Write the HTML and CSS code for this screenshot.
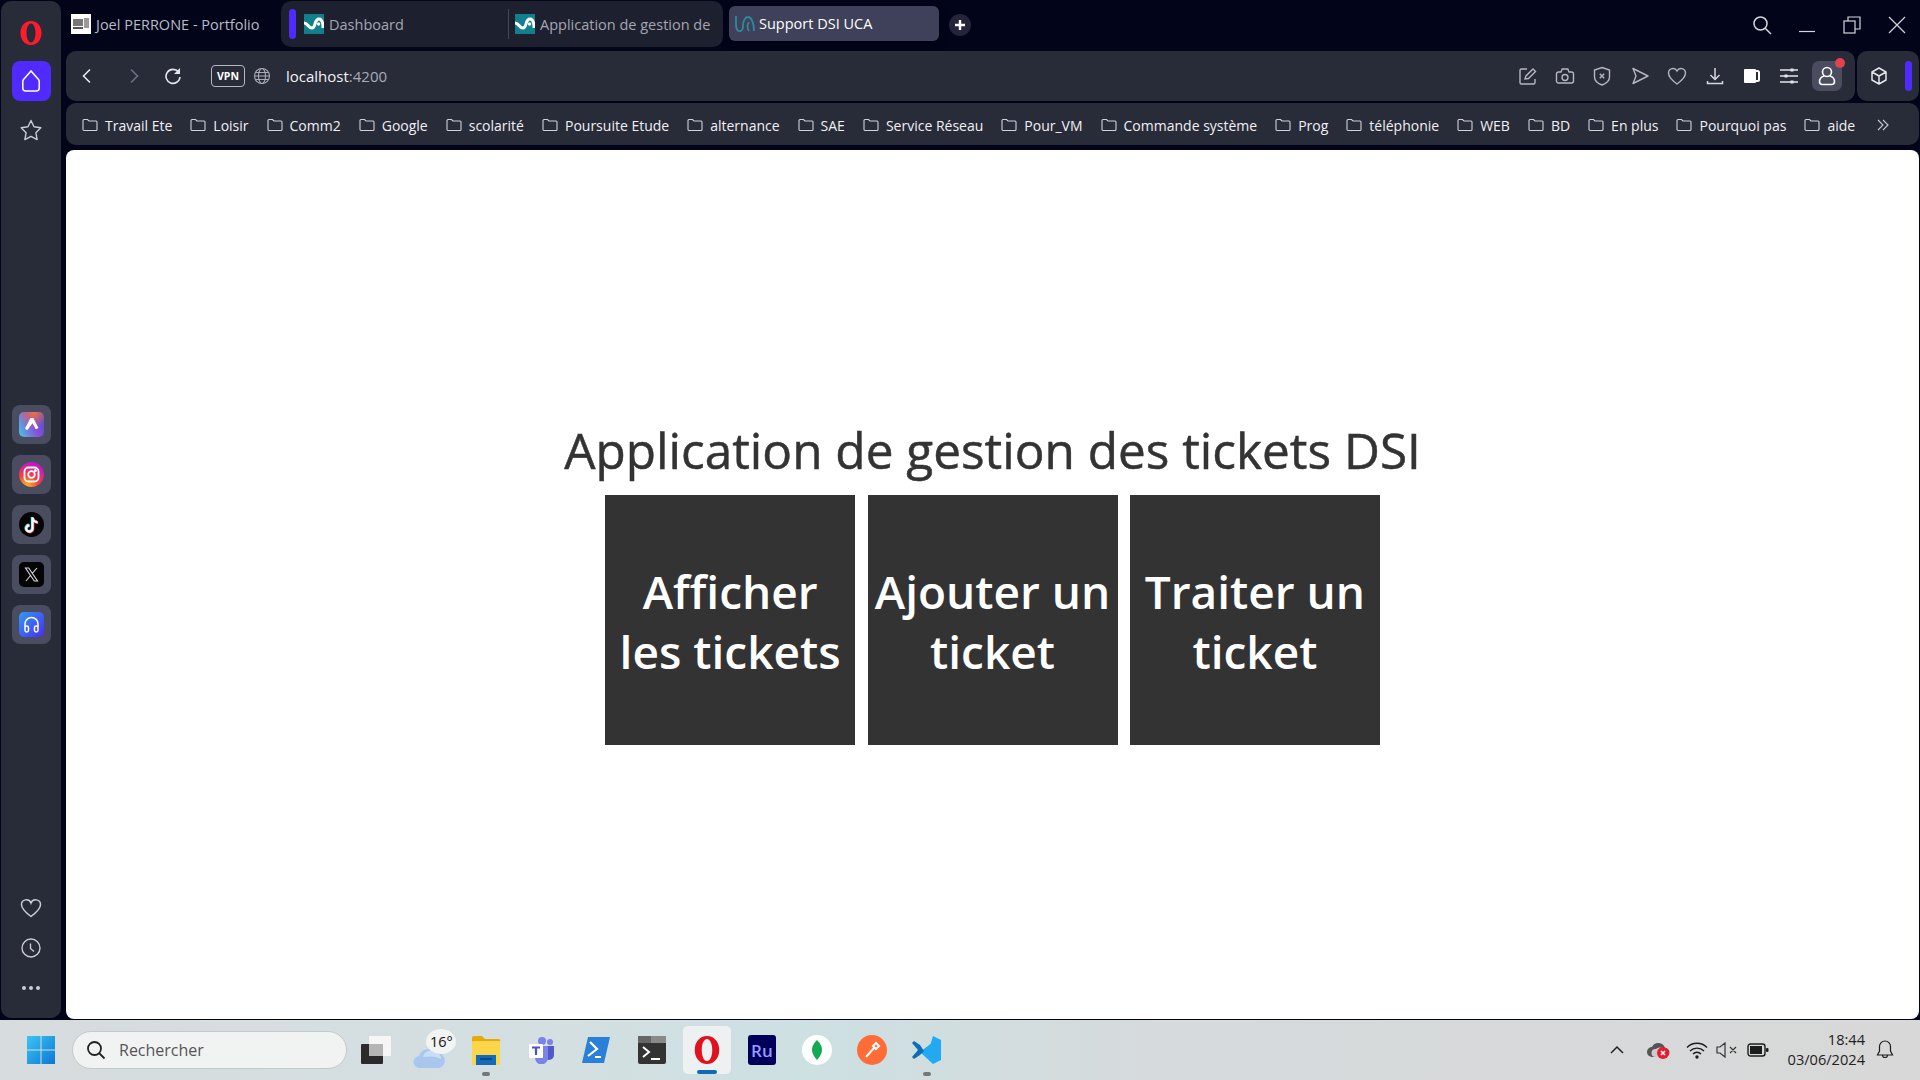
FILE: index.html
```html
<!DOCTYPE html>
<html lang="en">
<head>
    <meta charset="UTF-8">
    <title>Support DSI UCA</title>
    <link rel="stylesheet" href="styles.css">
</head>
<body>
    <div class="window">
        <!-- left sidebar -->
        <aside class="sidebar">
            <div class="side-logo">
                <svg width="24" height="26" viewBox="0 0 24 26"><path fill="#ff1b2d" fill-rule="evenodd" d="M12 1C5.500 1 1.500 6.500 1.500 13S5.500 25 12 25s10.500-5.500 10.500-12S18.500 1 12 1zm0 2.500c2.700 0 4.500 4.300 4.500 9.500s-1.800 9.500-4.500 9.500S7.500 18.200 7.500 13 9.300 3.500 12 3.500z"/></svg>
            </div>
            <div class="side-home">
                <svg width="22" height="24" viewBox="0 0 22 24" fill="none" stroke="#fff" stroke-width="1.500"><path d="M11 2 3.500 10.500a3 3 0 0 0-.7 1.900V19a3 3 0 0 0 3 3h10.400a3 3 0 0 0 3-3v-6.600a3 3 0 0 0-.7-1.900z"/></svg>
            </div>
            <div class="side-star">
                <svg width="24" height="24" viewBox="0 0 24 24" fill="none" stroke="#c9ccd6" stroke-width="1.400" stroke-linejoin="round"><path d="m12 2.500 3 6.300 6.800 1-4.900 4.900 1.200 6.900-6.100-3.300-6.100 3.300 1.200-6.900L2.200 9.800l6.800-1z"/></svg>
            </div>
            <div class="side-apps">
                <div class="app-btn"><span class="app-icon app-aria"><svg width="25" height="25" viewBox="0 0 25 25"><path fill="#fff" d="M11.500 6h2.800l5.200 10-2.700 1.300-3.300-6-5.300 7L6 16.500z"/></svg></span></div>
                <div class="app-btn"><span class="app-icon app-insta"><svg width="25" height="25" viewBox="0 0 25 25" fill="none" stroke="#fff" stroke-width="1.800"><rect x="5.500" y="5.500" width="14" height="14" rx="4"/><circle cx="12.500" cy="12.500" r="3.300"/><circle cx="16.400" cy="8.600" r=".6" fill="#fff"/></svg></span></div>
                <div class="app-btn"><span class="app-icon app-tiktok"><svg width="25" height="25" viewBox="0 0 25 25"><path fill="none" stroke="#25f4ee" stroke-width="2.400" d="M13 5v11a3.200 3.200 0 1 1-3.200-3.200M13 5c.3 2.800 2 4.500 5 4.800"/><path fill="none" stroke="#fe2c55" stroke-width="2.400" d="M14.200 6v11a3.200 3.200 0 1 1-3.200-3.200M14.200 6c.3 2.800 2 4.500 5 4.800"/><path fill="none" stroke="#fff" stroke-width="2.200" d="M13.600 5.500v11a3.200 3.200 0 1 1-3.200-3.200M13.600 5.500c.3 2.800 2 4.500 5 4.800"/></svg></span></div>
                <div class="app-btn"><span class="app-icon app-x"><svg width="25" height="25" viewBox="0 0 25 25" fill="none" stroke="#d8d8d8" stroke-width="1.100"><path d="M6.500 6h3.200l8.800 13h-3.200zM18 6l-5 5.600M11.500 13.500 7 19"/></svg></span></div>
                <div class="app-btn"><span class="app-icon app-music"><svg width="25" height="25" viewBox="0 0 25 25" fill="none" stroke="#fff" stroke-width="1.500"><path d="M6 15v-3a6.500 6.500 0 0 1 13 0v3"/><rect x="6" y="14" width="3.500" height="6" rx="1.700"/><rect x="15.500" y="14" width="3.500" height="6" rx="1.700"/></svg></span></div>
            </div>
            <div class="side-bottom">
                <svg width="22" height="20" viewBox="0 0 22 20" fill="none" stroke="#c9ccd6" stroke-width="1.500"><path d="M11 18.500C5 14 1.500 10.800 1.500 6.800A4.900 4.900 0 0 1 11 5a4.900 4.900 0 0 1 9.500 1.800c0 4-3.500 7.200-9.500 11.700z"/></svg>
                <svg width="20" height="20" viewBox="0 0 20 20" fill="none" stroke="#c9ccd6" stroke-width="1.400"><circle cx="10" cy="10" r="9"/><path d="M9.500 5.500v5l3.500 3"/></svg>
                <svg class="side-dots" width="20" height="6" viewBox="0 0 20 6" fill="#c9ccd6"><circle cx="3" cy="3" r="2"/><circle cx="10" cy="3" r="2"/><circle cx="17" cy="3" r="2"/></svg>
            </div>
        </aside>

        <div class="browser">
            <!-- tabs -->
            <div class="tabstrip">
                <div class="tab tab-plain">
                    <svg class="favicon" width="20" height="20" viewBox="0 0 20 20"><rect width="20" height="20" fill="#fff"/><rect x="2" y="5" width="10" height="7" fill="#777"/><rect x="13" y="4" width="5" height="10" fill="#999"/><rect x="2" y="13" width="10" height="2" fill="#555"/></svg>
                    <span>Joel PERRONE - Portfolio</span>
                </div>
                <div class="tab-group">
                    <span class="group-mark"></span>
                    <div class="tab tab-dash">
                        <svg class="favicon" width="20" height="20" viewBox="0 0 20 20"><rect width="20" height="20" fill="#12808c"/><path fill="none" stroke="#fff" stroke-width="3" d="M0 9c4 0 4 5 8 5s2-9 7-9c3 0 4 4 4 9"/><circle cx="14.500" cy="10" r="1.700" fill="#fff"/></svg>
                        <span>Dashboard</span>
                    </div>
                    <div class="tab tab-app">
                        <svg class="favicon" width="20" height="20" viewBox="0 0 20 20"><rect width="20" height="20" fill="#12808c"/><path fill="none" stroke="#fff" stroke-width="3" d="M0 9c4 0 4 5 8 5s2-9 7-9c3 0 4 4 4 9"/><circle cx="14.500" cy="10" r="1.700" fill="#fff"/></svg>
                        <span>Application de gestion de</span>
                    </div>
                </div>
                <div class="tab tab-active">
                    <svg class="favicon" width="22" height="20" viewBox="0 0 22 20" fill="none" stroke="#2f8a9e" stroke-width="1.800"><path d="M2 2v9c0 8 7 8 7 1 0-5 2-9 5-9s6 5 6 14"/><path d="M15 8c-2 3-2 6 0 9"/></svg>
                    <span>Support DSI UCA</span>
                </div>
                <div class="tab-new">
                    <svg width="12" height="12" viewBox="0 0 12 12" stroke="#fff" stroke-width="2.400"><path d="M6 1v10M1 6h10"/></svg>
                </div>
                <div class="win-controls">
                    <svg class="win-search" width="22" height="22" viewBox="0 0 22 22" fill="none" stroke="#d4d6dc" stroke-width="1.500"><circle cx="9.500" cy="9.500" r="6.500"/><path d="m14 14 6 6"/></svg>
                    <svg width="18" height="18" viewBox="0 0 18 18" stroke="#d4d6dc" stroke-width="1.200"><path d="M1 15.500h16"/></svg>
                    <svg width="18" height="18" viewBox="0 0 18 18" fill="none" stroke="#d4d6dc" stroke-width="1.200"><rect x="1" y="5" width="11" height="12"/><path d="M5 5V1h12v12h-5"/></svg>
                    <svg width="18" height="18" viewBox="0 0 18 18" stroke="#d4d6dc" stroke-width="1.200"><path d="m1 1 16 16M17 1 1 17"/></svg>
                </div>
            </div>

            <!-- address bar -->
            <div class="toolbar">
                <div class="addressbar">
                    <svg class="nav-icon" width="12" height="16" viewBox="0 0 12 16" fill="none" stroke="#e4e6ec" stroke-width="1.600"><path d="M9 1.500 2.500 8 9 14.500"/></svg>
                    <svg class="nav-icon nav-fwd" width="12" height="16" viewBox="0 0 12 16" fill="none" stroke="#6d7080" stroke-width="1.600"><path d="M3 1.500 9.500 8 3 14.500"/></svg>
                    <svg class="nav-icon nav-reload" width="18" height="18" viewBox="0 0 18 18" fill="none" stroke="#e4e6ec" stroke-width="1.600"><path d="M14.500 5A7 7 0 1 0 16 10"/><path fill="#e4e6ec" stroke="none" d="M16 1v6h-6z"/></svg>
                    <span class="vpn">VPN</span>
                    <svg class="globe" width="18" height="18" viewBox="0 0 18 18" fill="none" stroke="#a9acb8" stroke-width="1.100"><circle cx="9" cy="9" r="7.500"/><ellipse cx="9" cy="9" rx="3.500" ry="7.500"/><path d="M1.500 9h15M2.500 5.500h13M2.500 12.500h13"/></svg>
                    <span class="url">localhost<span class="url-port">:4200</span></span>
                    <div class="addr-actions">
                        <span class="act"><svg width="20" height="20" viewBox="0 0 20 20" fill="none" stroke="#b5b7c2" stroke-width="1.400"><path d="M9 3H3.500A1.500 1.500 0 0 0 2 4.500v12A1.500 1.500 0 0 0 3.500 18h12a1.500 1.500 0 0 0 1.500-1.500V13"/><path d="m7 13 1-3 7-7 2.500 2.500-7 7z"/></svg></span>
                        <span class="act"><svg width="20" height="20" viewBox="0 0 20 20" fill="none" stroke="#b5b7c2" stroke-width="1.400"><path d="M3.500 6H6l1.200-3h5.600L14 6h2.500A2 2 0 0 1 18.500 8v7a2 2 0 0 1-2 2h-13a2 2 0 0 1-2-2V8a2 2 0 0 1 2-2z"/><circle cx="10" cy="11.500" r="3"/></svg></span>
                        <span class="act"><svg width="20" height="20" viewBox="0 0 20 20" fill="none" stroke="#b5b7c2" stroke-width="1.400"><path d="M10 1.500 17.500 4v7c0 4-3.500 6.500-7.500 8-4-1.500-7.500-4-7.500-8V4z"/><path d="m7.800 7.800 4.400 4.400m0-4.400-4.400 4.400"/></svg></span>
                        <span class="act"><svg width="20" height="20" viewBox="0 0 20 20" fill="none" stroke="#b5b7c2" stroke-width="1.400" stroke-linejoin="round"><path d="m3 2.500 15 7.500-15 7.500L6 10z"/></svg></span>
                        <span class="act"><svg width="20" height="20" viewBox="0 0 20 20" fill="none" stroke="#b5b7c2" stroke-width="1.400"><path d="M10 18C4.500 14 1.500 11 1.500 7A4.500 4.500 0 0 1 10 5a4.500 4.500 0 0 1 8.500 2c0 4-3 7-8.500 11z"/></svg></span>
                        <span class="act"><svg width="20" height="20" viewBox="0 0 20 20" fill="none" stroke="#d6d8df" stroke-width="1.500"><path d="M10 2v11M5.500 9l4.500 4.500L14.500 9M2.500 15v2.500h15V15"/></svg></span>
                        <span class="act"><svg width="20" height="20" viewBox="0 0 20 20"><path fill="#fff" d="M3 3h10a1 1 0 0 1 1 1v12a1 1 0 0 1-1 1H3a1 1 0 0 1-1-1V4a1 1 0 0 1 1-1z"/><path fill="#fff" d="M14 4h1.500a2.500 2.500 0 0 1 2.500 2.500v7a2.500 2.500 0 0 1-2.500 2.500H14v-2h1.500a.5.500 0 0 0 .5-.5v-7a.5.500 0 0 0-.5-.5H14z"/></svg></span>
                        <span class="act"><svg width="20" height="20" viewBox="0 0 20 20" stroke="#e4e6ec" stroke-width="1.500"><path d="M1 4h18M1 10h18M1 16h18"/><path stroke-width="3" d="M13 2.500v3M7 8.500v3M13 14.500v3"/></svg></span>
                    </div>
                    <div class="profile">
                        <svg width="18" height="20" viewBox="0 0 18 20" fill="none" stroke="#fff" stroke-width="1.600"><circle cx="9" cy="6" r="4.500"/><path d="M6 10c-3 1-4.500 3-4.500 5.500 0 2 1.500 3 3 3h9c1.500 0 3-1 3-3C16.500 13 15 11 12 10"/></svg>
                        <span class="profile-dot"></span>
                    </div>
                </div>
                <div class="extensions">
                    <svg width="18" height="18" viewBox="0 0 18 18" fill="none" stroke="#e4e6ec" stroke-width="1.500" stroke-linejoin="round"><path d="m9 1 7 4v8l-7 4-7-4V5zM2 5l7 4 7-4M9 9v8"/></svg>
                    <span class="ext-bar"></span>
                </div>
            </div>

            <!-- bookmarks -->
            <nav class="bookmarks" id="bookmarks"></nav>

            <!-- the actual page -->
            <main class="viewport">
                <h1 class="page-title">Application de gestion des tickets DSI</h1>
                <div class="actions">
                    <button class="big-btn">Afficher les tickets</button>
                    <button class="big-btn">Ajouter un ticket</button>
                    <button class="big-btn">Traiter un ticket</button>
                </div>
            </main>
        </div>
    </div>

    <!-- windows taskbar -->
    <footer class="taskbar">
        <svg class="win-logo" width="30" height="30" viewBox="0 0 30 30"><defs><linearGradient id="winblue" x1="0" y1="0" x2="1" y2="1"><stop offset="0" stop-color="#3cc4f4"/><stop offset="1" stop-color="#0a78d4"/></linearGradient></defs><path fill="url(#winblue)" d="M1 1h13.500v13.500H1zM15.500 1H29v13.500H15.500zM1 15.500h13.500V29H1zM15.500 15.500H29V29H15.500z"/></svg>
        <div class="task-search">
            <svg width="20" height="20" viewBox="0 0 20 20" fill="none" stroke="#222" stroke-width="1.800"><circle cx="8.500" cy="8.500" r="6.500"/><path d="m13 13 5.500 5.500"/></svg>
            <span>Rechercher</span>
        </div>
        <div class="task-icons">
            <span class="task-slot"><svg width="32" height="30" viewBox="0 0 32 30"><rect x="1" y="9" width="22" height="20" rx="1" fill="#2b2b2b"/><rect x="9" y="1" width="22" height="20" rx="1" fill="#f6f6f6"/><rect x="9" y="9" width="14" height="12" fill="#b5b5b5"/></svg></span>
            <span class="task-slot task-weather">
                <svg width="32" height="22" viewBox="0 0 32 22"><rect x="22" y="0" width="6" height="8" fill="#f08a24"/><path fill="#a9c7ee" d="M7 22a6 6 0 0 1-1-12 9 9 0 0 1 16-3 7 7 0 0 1 4 15z"/><path fill="#c9def6" d="M10 11a7 7 0 0 1 12-4c4 0 6 2 6 6-5-3-12-3-18-2z"/></svg>
                <span class="temp">16°</span>
            </span>
            <span class="task-slot task-dot"><svg width="30" height="30" viewBox="0 0 30 30"><path fill="#e8a90c" d="M1 3a2 2 0 0 1 2-2h8l3 3h14a1 1 0 0 1 1 1v4H1z"/><rect x="1" y="6" width="28" height="24" rx="1" fill="#fbd54a"/><rect x="5" y="20" width="20" height="10" fill="#0f6cbd"/><rect x="9" y="23" width="12" height="2" fill="#07457e"/></svg></span>
            <span class="task-slot"><svg width="28" height="28" viewBox="0 0 28 28"><circle cx="23" cy="6" r="3" fill="#7b83eb"/><circle cx="15" cy="5" r="4" fill="#7b83eb"/><path fill="#5059c9" d="M17 10h10v9a5 5 0 0 1-10 0z"/><path fill="#7b83eb" d="M8 10h13v12a6 6 0 0 1-13 0z"/><rect x="2" y="8" width="14" height="14" rx="1" fill="#fff"/><path stroke="#4b53bc" stroke-width="2.200" d="M5 11.500h8M9 11.500V19"/></svg></span>
            <span class="task-slot"><svg width="30" height="28" viewBox="0 0 30 28"><path fill="#2a7fd9" d="M7 1h22l-6 26H1z"/><path fill="none" stroke="#fff" stroke-width="2.200" d="m9 6 7 7-9 7M14 21h6"/></svg></span>
            <span class="task-slot"><svg width="30" height="30" viewBox="0 0 30 30"><rect x="1" y="1" width="28" height="28" rx="2" fill="#333"/><rect x="1" y="1" width="13" height="7" fill="#666"/><rect x="14" y="1" width="15" height="7" fill="#8a8a8a"/><path fill="none" stroke="#fff" stroke-width="2" d="m6 12 6 5-6 5"/><path stroke="#fff" stroke-width="2" d="M14 24h9"/></svg></span>
            <span class="task-slot task-current"><svg width="28" height="32" viewBox="0 0 24 26"><path fill="#e0121f" fill-rule="evenodd" d="M12 1C5.500 1 1.500 6.500 1.500 13S5.500 25 12 25s10.500-5.500 10.500-12S18.500 1 12 1zm0 2.500c2.700 0 4.500 4.300 4.500 9.500s-1.800 9.500-4.500 9.500S7.500 18.200 7.500 13 9.300 3.500 12 3.500z"/></svg></span>
            <span class="task-slot"><span class="ru-icon">Ru</span></span>
            <span class="task-slot"><svg width="30" height="30" viewBox="0 0 30 30"><circle cx="15" cy="15" r="15" fill="#fff"/><path fill="#13aa52" d="M15 5c4 4 5 7 5 10s-2 7-5 10c-3-3-5-7-5-10s1-6 5-10z"/></svg></span>
            <span class="task-slot"><svg width="30" height="30" viewBox="0 0 30 30"><circle cx="15" cy="15" r="15" fill="#ff6c37"/><path fill="none" stroke="#fff" stroke-width="2" d="m9 22 8-9m2-5 3 3-3 3-3-3z"/></svg></span>
            <span class="task-slot task-dot"><svg width="30" height="30" viewBox="0 0 30 30"><path fill="#23a9f2" d="M21 1 29 5v20l-8 4-13-12 13-10v14l-5-4z"/><path fill="#0a6fb8" d="m8 10-6-4-2 2 6 7-6 7 2 2 6-4 4-4z"/></svg></span>
        </div>
        <div class="tray">
            <svg class="tray-chevron" width="16" height="10" viewBox="0 0 16 10" fill="none" stroke="#222" stroke-width="1.500"><path d="m2 8 6-6 6 6"/></svg>
            <span class="tray-cloud">
                <svg width="24" height="20" viewBox="0 0 24 20"><path fill="#555" d="M6 17a5 5 0 0 1 0-10 7 7 0 0 1 13 1 4.500 4.500 0 0 1 0 9z"/><path fill="#ccc" d="M9 17a4 4 0 0 1 1-8 5 5 0 0 1 8 1l2 7z"/><circle cx="17" cy="13" r="6" fill="#e81c2e"/><path stroke="#fff" stroke-width="1.500" d="m15 11 4 4m0-4-4 4"/></svg>
            </span>
            <svg class="tray-wifi" width="22" height="18" viewBox="0 0 22 18" fill="none" stroke="#1c1c1c" stroke-width="1.400"><path d="M1 6.500a14 14 0 0 1 20 0M4 10a10 10 0 0 1 14 0M7 13a5.500 5.500 0 0 1 8 0"/><circle cx="11" cy="16" r="1" fill="#1c1c1c"/></svg>
            <svg class="tray-sound" width="22" height="16" viewBox="0 0 22 16" fill="none" stroke="#333" stroke-width="1.200"><path d="M1 5v6h3l5 4V1L4 5zM14 5l6 6m0-6-6 6"/></svg>
            <svg class="tray-battery" width="22" height="14" viewBox="0 0 22 14"><rect x="1" y="1" width="17" height="12" rx="2.500" fill="none" stroke="#1c1c1c" stroke-width="1.400"/><rect x="3" y="3" width="12" height="8" fill="#1c1c1c"/><rect x="19" y="5" width="2.500" height="4" rx="1" fill="#1c1c1c"/></svg>
            <div class="clock"><span>18:44</span><span>03/06/2024</span></div>
            <svg class="tray-bell" width="18" height="20" viewBox="0 0 18 20" fill="none" stroke="#1c1c1c" stroke-width="1.200"><path d="M9 1a5.500 5.500 0 0 0-5.500 5.500V11L1.500 15h15l-2-4V6.500A5.500 5.500 0 0 0 9 1zM6.500 15a2.500 2.500 0 0 0 5 0"/></svg>
        </div>
    </footer>

    <script>
        const bookmarkNames = ['Travail Ete', 'Loisir', 'Comm2', 'Google', 'scolarité', 'Poursuite Etude', 'alternance', 'SAE', 'Service Réseau', 'Pour_VM', 'Commande système', 'Prog', 'téléphonie', 'WEB', 'BD', 'En plus', 'Pourquoi pas', 'aide'];
        const folderIcon = '<svg width="16" height="14" viewBox="0 0 16 14" fill="none" stroke="#d0d2da" stroke-width="1.100"><path d="M1 2.500A1 1 0 0 1 2 1.500h3.500L7 3h7a1 1 0 0 1 1 1v7.500a1 1 0 0 1-1 1H2a1 1 0 0 1-1-1z"/></svg>';
        const bar = document.getElementById('bookmarks');
        bookmarkNames.forEach(function(name) {
            const item = document.createElement('a');
            item.className = 'bookmark';
            item.innerHTML = folderIcon + '<span>' + name + '</span>';
            bar.appendChild(item);
        });
        const more = document.createElement('span');
        more.className = 'bookmark-more';
        more.innerHTML = '<svg width="14" height="12" viewBox="0 0 14 12" fill="none" stroke="#c9ccd6" stroke-width="1.100"><path d="m2 1 5 5-5 5M7 1l5 5-5 5"/></svg>';
        bar.appendChild(more);
    </script>
</body>
</html>
```

FILE: styles.css
```css
* { box-sizing: border-box; }
body { margin: 0; width: 1920px; height: 1080px; overflow: hidden; background-color: #02051a; font-family: "Open Sans", "Liberation Sans", sans-serif; color: #fff; }

.window { display: flex; height: 1020px; padding: 1px 1px 1px 1px; gap: 5px; }

.sidebar { width: 60px; flex: none; background-color: #282b38; border-radius: 10px; display: flex; flex-direction: column; align-items: center; height: 1017px; }
.side-logo { height: 60px; display: flex; align-items: center; justify-content: center; padding-top: 4px; }
.side-home { width: 39px; height: 40px; background-color: #4f2bff; border-radius: 8px; display: flex; align-items: center; justify-content: center; }
.side-star { margin-top: 17px; height: 24px; }
.side-apps { margin-top: 263px; display: flex; flex-direction: column; gap: 11px; }
.app-btn { width: 39px; height: 39px; border-radius: 8px; background-color: #4a4c60; display: flex; align-items: center; justify-content: center; }
.app-icon { width: 25px; height: 25px; display: block; }
.app-icon svg { display: block; }
.app-aria { border-radius: 5px; background: radial-gradient(circle at 60% 0%, #f5703c 0%, rgba(245,112,60,0) 55%), linear-gradient(65deg, #48c8e0 0%, #8a4fd8 55%, #3f4fd8 100%); }
.app-insta { border-radius: 50%; background: radial-gradient(circle at 30% 100%, #fdc21f 0%, #f5423c 40%, #c316c9 80%); }
.app-tiktok { border-radius: 50%; background-color: #050505; }
.app-x { border-radius: 5px; background-color: #050505; }
.app-music { border-radius: 5px; background: linear-gradient(135deg, #2f9af5 0%, #4a2cf5 100%); }
.side-bottom { margin-top: auto; padding-bottom: 27px; display: flex; flex-direction: column; align-items: center; gap: 20px; }
.side-dots { margin-top: 7px; }

.browser { flex: 1; min-width: 0; display: flex; flex-direction: column; }

.tabstrip { height: 50px; display: flex; align-items: flex-start; font-size: 14.500px; }
.tab { display: flex; align-items: center; gap: 5px; white-space: nowrap; }
.favicon { flex: none; }
.tab-plain { width: 215px; height: 46px; padding-left: 5px; color: #b9bbc6; }
.tab-group { width: 442px; height: 46px; background-color: #1d202e; border-radius: 10px; display: flex; align-items: center; padding-left: 8px; }
.group-mark { width: 7px; height: 30px; background-color: #4f2bff; border-radius: 4px; margin-right: 8px; }
.tab-dash { width: 204px; color: #a5a7b3; }
.tab-app { width: 205px; overflow: hidden; padding-left: 6px; border-left: 1px solid #44475a; color: #a5a7b3; height: 30px; }
.tab-active { width: 210px; height: 35px; margin: 5px 0 0 6px; padding-left: 5px; gap: 3px; background-color: #3e4159; border-radius: 6px; box-shadow: 0 3px 8px rgba(0,0,0,0.3); color: #fff; }
.tab-new { width: 22px; height: 22px; margin: 13px 0 0 10px; border-radius: 50%; background-color: #23263a; display: flex; align-items: center; justify-content: center; }
.win-controls { margin-left: auto; display: flex; align-items: center; gap: 27px; height: 36px; margin-top: 6px; padding-right: 13px; }
.win-search { margin-right: -2px; }

.toolbar { height: 50px; display: flex; gap: 2px; }
.addressbar { flex: 1; background-color: #282b38; border-radius: 10px; display: flex; align-items: center; padding-left: 15px; font-size: 15px; }
.nav-fwd { margin-left: 35px; }
.nav-reload { margin-left: 24px; }
.vpn { margin-left: 29px; width: 34px; height: 22px; border: 1px solid #b5b7c2; border-radius: 4px; font-size: 10.500px; font-weight: 700; display: flex; align-items: center; justify-content: center; }
.globe { margin-left: 8px; }
.url { margin-left: 15px; color: #f2f3f6; }
.url-port { color: #a9acb8; }
.addr-actions { margin-left: auto; display: flex; }
.act { width: 37.400px; height: 30px; display: flex; align-items: center; justify-content: center; }
.profile { position: relative; width: 30px; height: 30px; margin: 0 13px 0 4px; background-color: #4a4c60; border-radius: 7px; display: flex; align-items: center; justify-content: center; }
.profile-dot { position: absolute; top: -3px; right: -3px; width: 10px; height: 10px; border-radius: 50%; background-color: #e5404f; }
.extensions { width: 62px; background-color: #282b38; border-radius: 10px; display: flex; align-items: center; padding-left: 13px; gap: 17px; }
.ext-bar { width: 7px; height: 30px; border-radius: 4px; background-color: #4f2bff; }

.bookmarks { height: 42px; margin-top: 2px; background-color: #282b38; border-radius: 10px; display: flex; align-items: center; padding: 2px 0 0 16px; gap: 18px; font-size: 14px; color: #f0f1f4; }
.bookmark { display: flex; align-items: center; gap: 7px; white-space: nowrap; }
.bookmark svg { flex: none; }
.bookmark-more { margin-left: auto; margin-right: 29px; display: flex; }

.viewport { flex: 1; margin-top: 5px; padding-bottom: 7px; background-color: #fff; border-radius: 8px; display: flex; flex-direction: column; align-items: center; justify-content: center; color: #333; }
.page-title { margin: 0 0 12px; font-size: 49.500px; line-height: 65px; font-weight: 500; -webkit-text-stroke: 0.5px #333; white-space: nowrap; color: #333; }
.actions { display: flex; gap: 12.400px; }
.big-btn { width: 250px; height: 250px; padding: 2px 5px 0; border: none; background-color: #333; color: #fff; font-family: inherit; font-size: 46px; line-height: 60px; font-weight: 600; }

.taskbar { height: 60px; display: flex; align-items: center; padding-left: 26px; background: linear-gradient(90deg, #d7dcde 0%, #d3dfe1 30%, #cde0e2 42%, #d6dadc 60%, #d8d8d8 100%); color: #1c1c1c; }
.win-logo { flex: none; }
.task-search { width: 275px; height: 38px; margin: 0 1px 0 16px; padding-left: 13px; display: flex; align-items: center; gap: 13px; border-radius: 19px; background-color: #f1f3f3; border: 1px solid #c6c9ca; font-size: 16px; color: #555; }
.task-icons { display: flex; align-items: center; }
.task-slot { position: relative; width: 55.200px; height: 48px; display: flex; align-items: center; justify-content: center; }
.task-weather svg { margin: 14px 4px 0 0; }
.temp { position: absolute; top: 3px; right: 2px; width: 30px; height: 25px; border-radius: 50%; background-color: #f2f3f3; font-size: 14.500px; text-align: center; line-height: 25px; color: #111; }
.task-dot::after { content: ""; position: absolute; bottom: -2px; left: 50%; margin-left: -4px; width: 8px; height: 4px; border-radius: 2px; background-color: #777; }
.task-current { width: 48px; margin: 0 3.600px; border-radius: 5px; background-color: #eef1f2; }
.task-current::after { content: ""; position: absolute; bottom: 0; left: 14px; width: 20px; height: 4px; border-radius: 2px; background-color: #0f6cbd; }
.ru-icon { width: 28px; height: 30px; border-radius: 3px; background-color: #00005b; color: #9a9cff; font-size: 17px; font-weight: 600; display: flex; align-items: center; justify-content: center; }

.tray { margin-left: auto; display: flex; align-items: center; padding-right: 26px; }
.tray-cloud { margin-left: 21px; width: 24px; display: flex; }
.tray-chevron { flex: none; }
.tray-wifi { margin-left: 16px; }
.tray-sound { margin-left: 8px; }
.tray-battery { margin-left: 9px; }
.clock { margin-left: 8px; padding-bottom: 2px; display: flex; flex-direction: column; align-items: flex-end; font-size: 14.600px; line-height: 20px; color: #222; width: 88px; }
.tray-bell { margin-left: 11px; }
```
